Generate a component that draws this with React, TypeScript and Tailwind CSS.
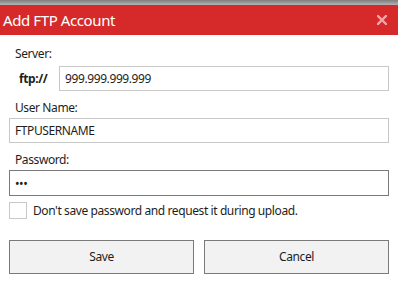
import { useState } from "react";

const font = { fontFamily: '"Noto Sans", "Open Sans", sans-serif' };

const CloseIcon = () => (
  <svg width="10" height="10" viewBox="0 0 10 10" className="block">
    <path d="M1 1 L9 9 M9 1 L1 9" stroke="#f4a3aa" strokeWidth="2.4" strokeLinecap="square" />
  </svg>
);

const App = () => {
  const [server, setServer] = useState("999.999.999.999");
  const [user, setUser] = useState("FTPUSERNAME");
  const [pass, setPass] = useState("abc");
  const [noSave, setNoSave] = useState(false);

  return (
    <div className="w-[398px] h-[284px] bg-white text-[#1e1e1e] overflow-hidden tracking-[-0.4px]" style={font}>
      <div className="h-[5px] bg-gradient-to-b from-[#7f7f7f] to-[#b4b4b4]" />

      {/* Title bar */}
      <div className="h-[30px] bg-[#d62a2a] flex items-center justify-between pl-[3px] pr-[11px]">
        <span className="text-white text-[15px] leading-[30px]">Add FTP Account</span>
        <CloseIcon />
      </div>

      <div className="px-[9px]">
        <div className="h-[16px] mt-[11px] mb-[4px] pl-[6px] text-[12px] leading-[16px]">Server:</div>
        <div className="flex items-center">
          <span className="w-[50px] pl-[10px] text-[12px] font-bold">ftp://</span>
          <input
            value={server}
            onChange={(e) => setServer(e.target.value)}
            className="flex-1 h-[25px] border border-[#c8c8c8] px-[5px] text-[12px] outline-none"
          />
        </div>

        <div className="h-[16px] mt-[9px] mb-[2px] pl-[6px] text-[12px] leading-[16px]">User Name:</div>
        <input
          value={user}
          onChange={(e) => setUser(e.target.value)}
          className="block w-full h-[25px] border border-[#c8c8c8] px-[5px] text-[12px] outline-none"
        />

        <div className="h-[16px] mt-[9px] mb-[2px] pl-[6px] text-[12px] leading-[16px]">Password:</div>
        <input
          type="password"
          value={pass}
          onChange={(e) => setPass(e.target.value)}
          className="block w-full h-[26px] border border-[#7a7a7a] px-[5px] text-[12px] outline-none"
        />

        <label className="flex items-center mt-[6px] h-[17px] cursor-pointer">
          <input
            type="checkbox"
            checked={noSave}
            onChange={(e) => setNoSave(e.target.checked)}
            className="appearance-none w-[18px] h-[17px] border border-[#c8c8c8] bg-white checked:bg-[#d62a2a]"
          />
          <span className="ml-[6px] text-[12px]">Don't save password and request it during upload.</span>
        </label>

        <div className="flex gap-[10px] mt-[21px]">
          <button className="flex-1 h-[34px] bg-[#f2f2f2] border border-[#7a7a7a] text-[12px]">Save</button>
          <button className="flex-1 h-[34px] bg-[#f2f2f2] border border-[#7a7a7a] text-[12px]">Cancel</button>
        </div>
      </div>
    </div>
  );
};

export default App;
